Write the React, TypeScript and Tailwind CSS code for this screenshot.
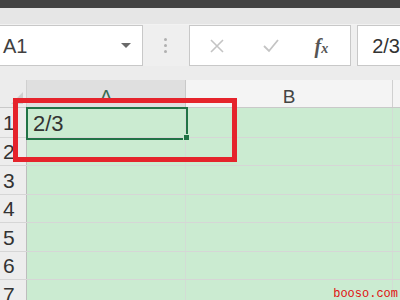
import React from "react";

const rows = [
  { n: "1", h: "h-[30px]" },
  { n: "2", h: "h-[28px]" },
  { n: "3", h: "h-[29px]" },
  { n: "4", h: "h-[28px]" },
  { n: "5", h: "h-[29px]" },
  { n: "6", h: "h-[28px]" },
  { n: "7", h: "h-[29px]" },
];

export default function App() {
  return (
    <div
      className="relative w-[400px] h-[300px] overflow-hidden bg-[#efefef] flex flex-col"
      style={{ fontFamily: '"Liberation Sans", Arial, sans-serif' }}
    >
      <div className="h-[8px] shrink-0 bg-[#434343]" />
      <div className="h-[17px] shrink-0 bg-[#e6e6e6] border-b border-[#f2f2f2]" />
      {/* formula toolbar */}
      <div className="h-[41px] shrink-0 flex items-stretch">
        <div className="w-[145px] ml-[-1px] bg-white border border-[#c8c8c8] flex items-center justify-between pl-[3px] pr-[11px]">
          <span className="text-[20px] text-[#404040] leading-none">A1</span>
          <svg width="10" height="6" viewBox="0 0 10 6">
            <path d="M0 0 L10 0 L5 5 Z" fill="#6a6a6a" />
          </svg>
        </div>
        <div className="w-[46px] flex flex-col items-center justify-center gap-[3px]">
          <div className="w-[3px] h-[3px] rounded-full bg-[#b0b0b0]" />
          <div className="w-[3px] h-[3px] rounded-full bg-[#b0b0b0]" />
          <div className="w-[3px] h-[3px] rounded-full bg-[#b0b0b0]" />
        </div>
        <div className="w-[164px] bg-white border border-[#c8c8c8] flex items-center">
          <svg width="16" height="16" viewBox="0 0 16 16" className="ml-[19px]">
            <path d="M2 2 L14 14 M14 2 L2 14" stroke="#c4c4c4" strokeWidth="1.6" />
          </svg>
          <svg width="18" height="16" viewBox="0 0 18 16" className="ml-[37px]">
            <path d="M2 8 L7 13 L16 2" stroke="#c4c4c4" strokeWidth="1.8" fill="none" />
          </svg>
          <span
            className="ml-[35px] text-[20px] italic font-bold text-[#555] leading-none"
            style={{ fontFamily: '"Liberation Serif", "Times New Roman", serif' }}
          >
            f<span className="text-[14px]">x</span>
          </span>
        </div>
        <div className="w-[6px]" />
        <div className="flex-1 bg-white border border-[#c8c8c8] border-r-0 flex items-center pl-[14px]">
          <span className="text-[20px] text-[#333] leading-none whitespace-nowrap">2/3</span>
        </div>
      </div>
      <div className="h-[14px] shrink-0 bg-[#ececec]" />
      {/* header row */}
      <div className="h-[28px] shrink-0 flex bg-[#f4f4f4] border-b border-[#c9c9c9]">
        <div className="w-[27px] relative bg-[#ececec] border-r border-[#d0d0d0]">
          <svg width="12" height="12" viewBox="0 0 12 12" className="absolute right-[3px] bottom-[3px]">
            <path d="M12 0 L12 12 L0 12 Z" fill="#cfcfcf" />
          </svg>
        </div>
        <div className="w-[159px] bg-[#dfdfdf] border-r border-[#c9c9c9] flex items-end justify-center pb-[1px]">
          <span className="text-[19px] text-[#3a6b52] leading-none">A</span>
        </div>
        <div className="w-[207px] border-r border-[#d0d0d0] flex items-end justify-center pb-[1px]">
          <span className="text-[19px] text-[#444] leading-none">B</span>
        </div>
        <div className="flex-1" />
      </div>
      {/* rows */}
      {rows.map((r) => (
        <div key={r.n} className={`${r.h} shrink-0 flex border-b border-[#d6d6d6]`}>
          <div className="w-[27px] bg-[#ededed] border-r border-[#bdbdbd] flex items-center pl-[3px]">
            <span className="text-[21px] text-[#333] leading-none">{r.n}</span>
          </div>
          <div className="w-[159px] bg-[#cbebd1] border-r border-[#d3dcd5]" />
          <div className="w-[207px] bg-[#cbebd1] border-r border-[#d3dcd5]" />
          <div className="flex-1 bg-[#cbebd1]" />
        </div>
      ))}

      {/* selection overlay */}
      <div className="absolute left-[26px] top-[107px] w-[162px] h-[33px] border-2 border-[#217346] flex items-center pl-[5px]">
        <span className="text-[22px] text-[#333] leading-none">2/3</span>
      </div>
      <div className="absolute left-[183px] top-[134px] w-[7px] h-[7px] bg-[#217346] border border-[#cbebd1]" />

      {/* red annotation box */}
      <div className="absolute left-[13px] top-[98px] w-[224px] h-[64px] border-[5px] border-[#e5232b]" />

      {/* watermark */}
      <div
        className="absolute right-[2px] bottom-[0px] text-[12px] leading-none text-[#e01010]"
        style={{ fontFamily: '"Liberation Mono", "DejaVu Sans Mono", monospace' }}
      >
        booso.com
      </div>
    </div>
  );
}
